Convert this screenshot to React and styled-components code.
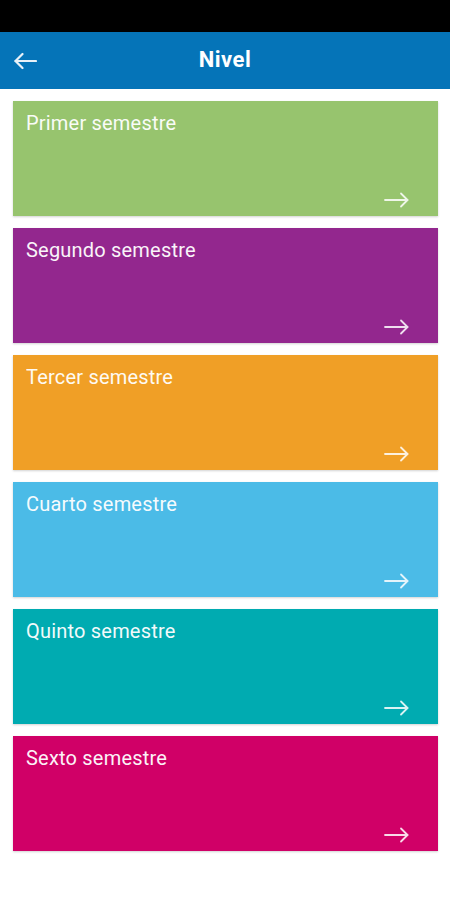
import React from 'react'
import styled, { createGlobalStyle } from 'styled-components'

const GlobalStyle = createGlobalStyle`
    html, body {
        margin: 0;
        padding: 0;
        background: #ffffff;
        font-family: Roboto, 'Noto Sans', sans-serif;
    }
`

const Screen = styled.div`
    width: 450px;
    min-height: 900px;
    background: #fff;
    display: flex;
    flex-direction: column;
`

const StatusBar = styled.div`
    height: 32px;
    background: #000;
`

const Header = styled.header`
    height: 57px;
    background: #0574b8;
    display: flex;
    align-items: center;
    justify-content: center;
    position: relative;
    color: #fff;

    h1 {
        margin: 0 0 3px;
        font-size: 22px;
        font-weight: 700;
        letter-spacing: 0.5px;
    }
`

const BackButton = styled.button`
    position: absolute;
    left: 14px;
    top: 50%;
    transform: translateY(-50%);
    background: none;
    border: 0;
    padding: 0;
    display: flex;
    color: #e8f1f8;
`

const List = styled.div`
    display: flex;
    flex-direction: column;
    gap: 12px;
    padding: 12px 12px 0 13px;
`

const Card = styled.div`
    height: 115px;
    background: ${props => props.color};
    box-shadow: 0 1px 2px rgba(0, 0, 0, 0.18);
    display: flex;
    flex-direction: column;
    justify-content: space-between;
    padding: 10px 29px 8px 13px;
    box-sizing: border-box;
    color: #fff;

    .title {
        font-size: 20px;
        line-height: 24px;
        letter-spacing: 0.2px;
        opacity: 0.95;
    }
    .arrow {
        align-self: flex-end;
        display: flex;
        opacity: 0.85;
    }
`

const RightArrow = () => (
    <svg width="25" height="16" viewBox="0 0 25 16" fill="none" stroke="currentColor" strokeWidth="1.8" strokeLinecap="round" strokeLinejoin="round">
        <path d="M1 8h22.5" />
        <path d="M17 1.5L23.5 8 17 14.5" />
    </svg>
)

const LeftArrow = () => (
    <svg width="23" height="17" viewBox="0 0 23 17" fill="none" stroke="currentColor" strokeWidth="2.2" strokeLinecap="round" strokeLinejoin="round">
        <path d="M22 8.5H1.5" />
        <path d="M8.5 1.5l-7 7 7 7" />
    </svg>
)

const levels = [
    { name: 'Primer semestre', color: '#97c46e' },
    { name: 'Segundo semestre', color: '#93278e' },
    { name: 'Tercer semestre', color: '#f09f26' },
    { name: 'Cuarto semestre', color: '#4bbbe7' },
    { name: 'Quinto semestre', color: '#00abb1' },
    { name: 'Sexto semestre', color: '#d00067' },
]

export default function App() {
    return (
        <Screen>
            <GlobalStyle />
            <StatusBar />
            <Header>
                <BackButton>
                    <LeftArrow />
                </BackButton>
                <h1>Nivel</h1>
            </Header>
            <List>
                {levels.map(l => (
                    <Card key={l.name} color={l.color}>
                        <div className="title">{l.name}</div>
                        <div className="arrow">
                            <RightArrow />
                        </div>
                    </Card>
                ))}
            </List>
        </Screen>
    )
}
